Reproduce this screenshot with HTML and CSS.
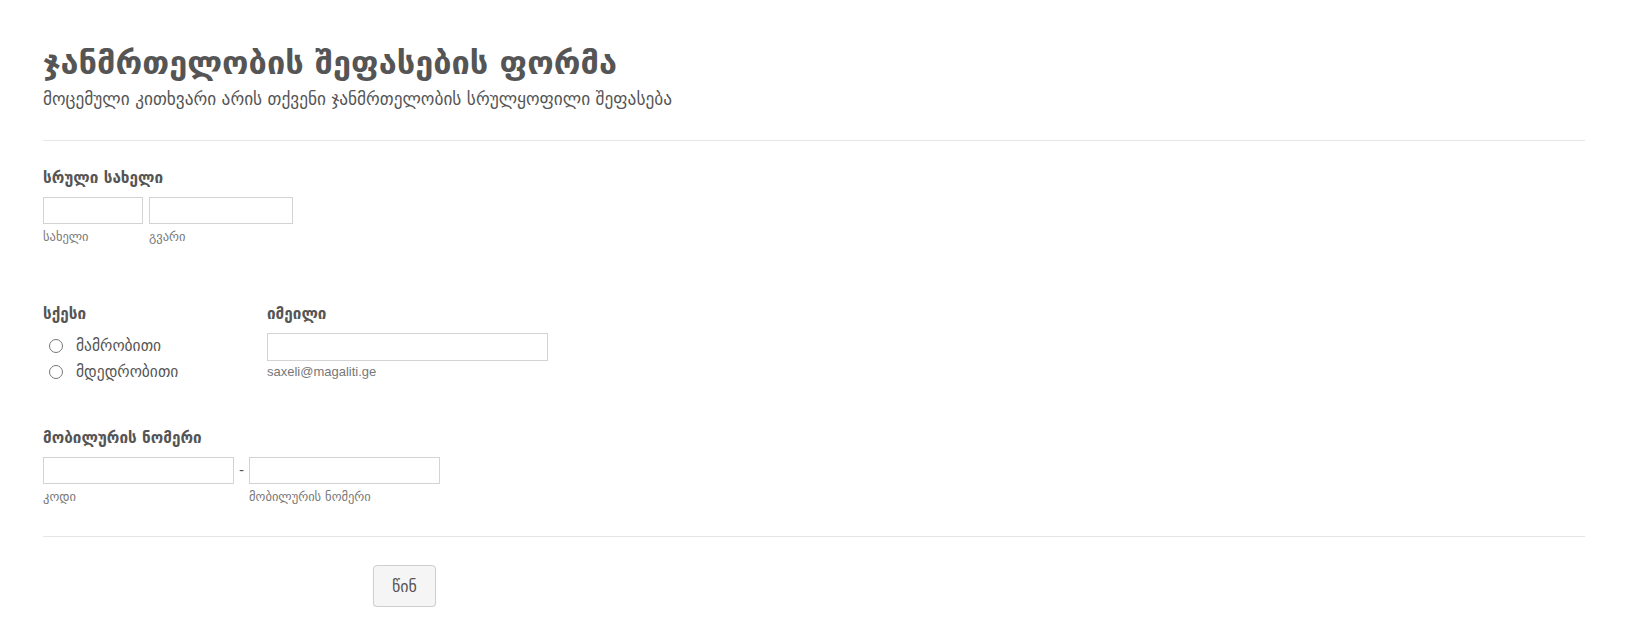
FILE: index.html
```html
<!DOCTYPE html>
<html lang="ka">
<head>
<meta charset="UTF-8" />
<meta name="viewport" content="width=device-width, initial-scale=1" />
<title>ჯანმრთელობის შეფასების ფორმა</title>
<link rel="stylesheet" href="styles.css">
</head>
<body>

  <div class="form">
    <div class="header">
      <div class="title">ჯანმრთელობის შეფასების ფორმა</div>
      <div class="subtitle">მოცემული კითხვარი არის თქვენი ჯანმრთელობის სრულყოფილი შეფასება</div>
    </div>

    <div class="field field-name">
      <div class="label">სრული სახელი</div>
      <div class="inputs">
        <div class="sub">
          <input type="text" class="in in-first" />
          <div class="hint">სახელი</div>
        </div>
        <div class="sub">
          <input type="text" class="in in-last" />
          <div class="hint">გვარი</div>
        </div>
      </div>
    </div>

    <div class="row">
      <div class="field field-gender">
        <div class="label">სქესი</div>
        <label class="radio"><span class="dot"></span>მამრობითი</label>
        <label class="radio"><span class="dot"></span>მდედრობითი</label>
      </div>
      <div class="field field-email">
        <div class="label">იმეილი</div>
        <input type="text" class="in in-email" />
        <div class="hint hint-latin">saxeli@magaliti.ge</div>
      </div>
    </div>

    <div class="field field-phone">
      <div class="label">მობილურის ნომერი</div>
      <div class="inputs inputs-phone">
        <div class="sub">
          <input type="text" class="in in-code" />
          <div class="hint">კოდი</div>
        </div>
        <span class="dash">-</span>
        <div class="sub">
          <input type="text" class="in in-phone" />
          <div class="hint">მობილურის ნომერი</div>
        </div>
      </div>
    </div>

    <div class="footer">
      <button class="btn-next">წინ</button>
    </div>
  </div>

</body>
</html>
```

FILE: styles.css
```css
body {
  margin: 0;
  background: #fff;
  color: #555;
  font-family: "DejaVu Sans", "Noto Sans", sans-serif;
}
.form {
  padding: 0 43px;
}
.header {
  padding-top: 39px;
  padding-bottom: 29px;
  border-bottom: 1px solid #e6e6e6;
}
.title {
  font-size: 32.5px;
  font-weight: 700;
  line-height: 48px;
}
.subtitle {
  font-size: 17.3px;
  line-height: 24px;
}
.label {
  font-size: 15.3px;
  font-weight: 700;
  line-height: 20px;
  margin-bottom: 9px;
}
.field-name {
  margin-top: 27px;
}
.inputs {
  display: flex;
  align-items: flex-start;
  gap: 6px;
}
.inputs-phone {
  gap: 0;
}
.in {
  display: block;
  box-sizing: border-box;
  height: 27px;
  margin: 0;
  border: 1px solid #d3d3d3;
  background: #fff;
  outline: none;
}
.in-first { width: 100px; }
.in-last { width: 144px; }
.in-email { width: 281px; height: 28px; }
.in-code { width: 191px; }
.in-phone { width: 191px; }
.hint {
  font-size: 12.5px;
  line-height: 20px;
  margin-top: 3px;
  color: #777;
}
.hint-latin {
  font-family: "Liberation Sans", Arial, sans-serif;
  font-size: 13px;
  line-height: 22px;
  margin-top: 0;
}
.row {
  display: flex;
  margin-top: 57px;
}
.field-gender {
  width: 224px;
}
.radio {
  display: flex;
  align-items: center;
  font-size: 15.5px;
  line-height: 26px;
  color: #555;
}
.dot {
  width: 14px;
  height: 14px;
  box-sizing: border-box;
  border: 1px solid #777;
  border-radius: 50%;
  margin: 0 13px 0 6px;
}
.field-phone {
  margin-top: 43px;
}
.dash {
  font-size: 14px;
  line-height: 27px;
  padding: 0 5px;
}
.footer {
  margin-top: 29px;
  padding-top: 28px;
  border-top: 1px solid #e6e6e6;
  padding-left: 330px;
}
.btn-next {
  width: 63px;
  height: 42px;
  border: 1px solid #cfcfcf;
  border-radius: 4px;
  background: #f5f5f5;
  color: #555;
  font-family: "DejaVu Sans", sans-serif;
  font-size: 16px;
  box-shadow: 0 1px 1px rgba(0,0,0,0.08);
}
```
